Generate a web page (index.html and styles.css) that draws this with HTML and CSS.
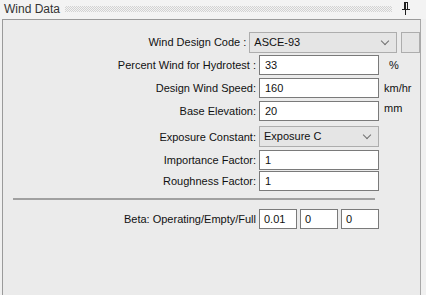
FILE: index.html
```html
<!DOCTYPE html>
<html lang="en">
<head>
    <meta charset="UTF-8">
    <title>Wind Data</title>
    <link rel="stylesheet" href="styles.css">
</head>
<body>
    <div class="titlebar">
        <span class="title">Wind Data</span>
        <span class="dots"></span>
        <svg class="pin" width="8" height="13" viewBox="0 0 8 13">
            <rect x="2" y="0" width="4" height="1" fill="#1e1e1e"/>
            <rect x="2" y="1" width="2" height="6" fill="#1e1e1e"/>
            <rect x="5" y="1" width="1" height="6" fill="#1e1e1e"/>
            <rect x="0" y="7" width="8" height="1" fill="#1e1e1e"/>
            <rect x="3" y="8" width="1" height="5" fill="#1e1e1e"/>
        </svg>
    </div>

    <div class="panel">
        <div class="row first">
            <label>Wind Design Code :</label>
            <div class="select wide">ASCE-93<span class="caret"></span></div>
            <div class="sidebtn"></div>
        </div>
        <div class="row">
            <label>Percent Wind for Hydrotest :</label>
            <div class="field">33</div>
            <span class="unit pct">%</span>
        </div>
        <div class="row">
            <label>Design Wind Speed:</label>
            <div class="field">160</div>
            <span class="unit">km/hr</span>
        </div>
        <div class="row">
            <label>Base Elevation:</label>
            <div class="field">20</div>
            <span class="unit up">mm</span>
        </div>
        <div class="row gap">
            <label>Exposure Constant:</label>
            <div class="select">Exposure C<span class="caret"></span></div>
        </div>
        <div class="row tight">
            <label>Importance Factor:</label>
            <div class="field">1</div>
        </div>
        <div class="row tight">
            <label>Roughness Factor:</label>
            <div class="field">1</div>
        </div>

        <hr class="sep">

        <div class="row">
            <label>Beta: Operating/Empty/Full</label>
            <div class="triple">
                <div class="field small">0.01</div>
                <div class="field small">0</div>
                <div class="field small">0</div>
            </div>
        </div>
    </div>
</body>
</html>
```

FILE: styles.css
```css
html, body {
    margin: 0;
    height: 100%;
    overflow: hidden;
}

body {
    background: #f0f0f0;
    font-family: "Liberation Sans", Arial, sans-serif;
    font-size: 11px;
    color: #111;
}

.titlebar {
    display: flex;
    align-items: center;
    height: 19px;
    padding: 0 0 0 4px;
    background: #f3f3f3;
}

.title {
    font-size: 12px;
    color: #333;
    margin-top: -2px;
}

.dots {
    flex: 1;
    height: 6px;
    margin: -1px 10px 0 5px;
    background-image: conic-gradient(#d2d2d2 25%, transparent 0 50%, #d2d2d2 0 75%, transparent 0);
    background-size: 2px 2px;
}

.pin {
    margin-right: 16px;
    margin-top: -3px;
}

.panel {
    margin-left: 2px;
    width: 417px;
    height: 300px;
    background: #ebebeb;
    border-top: 1px solid #9a9a9a;
    border-left: 1px solid #9a9a9a;
    border-right: 1px solid #a8a8a8;
    overflow: hidden;
}

.row {
    display: flex;
    align-items: center;
    height: 20px;
    margin-bottom: 3px;
}

.row.first {
    margin-top: 12px;
}

.row.gap {
    margin-top: 5px;
    height: 21px;
}

.row.tight {
    margin-bottom: 1px;
}

label {
    width: 253px;
    text-align: right;
    padding-right: 3px;
    white-space: nowrap;
}

.field {
    box-sizing: border-box;
    width: 120px;
    height: 20px;
    background: #fff;
    border: 1px solid #7a7a7a;
    padding: 3px 0 0 5px;
}

.select {
    position: relative;
    box-sizing: border-box;
    width: 120px;
    height: 21px;
    background: #e5e5e5;
    border: 1px solid #adadad;
    padding: 3px 0 0 4px;
}

.select.wide {
    width: 153px;
}

.caret {
    position: absolute;
    right: 8px;
    top: 5px;
    width: 5px;
    height: 5px;
    border-right: 1px solid #707070;
    border-bottom: 1px solid #707070;
    transform: rotate(45deg);
}

.sidebtn {
    box-sizing: border-box;
    margin-left: 4px;
    width: 20px;
    height: 21px;
    background: #e5e5e5;
    border: 1px solid #adadad;
}

.unit {
    margin-left: 5px;
}

.unit.pct {
    margin-left: 10px;
}

.unit.up {
    margin-top: -7px;
}

.sep {
    margin: 7px 45px 9px 10px;
    border: 0;
    border-top: 2px solid #a0a0a0;
}

.triple {
    display: flex;
    gap: 3px;
}

.field.small {
    width: 38px;
    padding-left: 4px;
}
```
